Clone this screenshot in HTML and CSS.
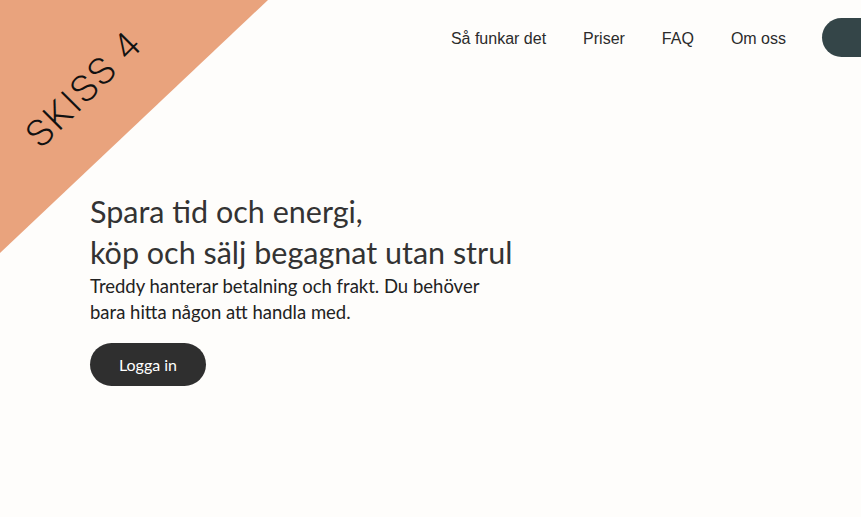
FILE: index.html
```html
<!DOCTYPE html>
<html lang="sv">
<head>
<meta charset="utf-8">
<title>Treddy</title>
<link rel="stylesheet" href="styles.css">
</head>
<body>
<div class="page">
  <div class="corner"><span class="corner-text">SKISS 4</span></div>
  <header class="header">
    <nav class="nav">
      <a class="nav-link" href="#">Så funkar det</a>
      <a class="nav-link" href="#">Priser</a>
      <a class="nav-link" href="#">FAQ</a>
      <a class="nav-link" href="#">Om oss</a>
    </nav>
    <a class="cta-top" href="#"></a>
  </header>
  <main class="hero">
    <h1 class="hero-title">Spara tid och energi,<br>köp och sälj begagnat utan strul</h1>
    <p class="hero-text">Treddy hanterar betalning och frakt. Du behöver<br>bara hitta någon att handla med.</p>
    <a class="btn" href="#">Logga in</a>
  </main>
</div>
</body>
</html>
```
FILE: styles.css
```css
html, body {
  margin: 0;
  padding: 0;
  background: #fefdfb;
  overflow: hidden;
}
.page {
  position: relative;
  width: 861px;
  height: 517px;
  overflow: hidden;
}
.corner {
  position: absolute;
  left: 0;
  top: 0;
  width: 268px;
  height: 253px;
  background: #e9a37d;
  clip-path: polygon(0 0, 100% 0, 0 100%);
  z-index: 2;
}
.corner-text {
  position: absolute;
  left: 84px;
  top: 89px;
  transform: translate(-50%, -50%) rotate(-45deg);
  font-family: "Roboto", "Liberation Sans", sans-serif;
  font-weight: 300;
  font-size: 37px;
  letter-spacing: 2.5px;
  color: #111;
  white-space: nowrap;
}
.header {
  display: flex;
  justify-content: flex-end;
  align-items: center;
  padding-top: 18px;
  margin-right: -61px;
}
.nav {
  display: flex;
  gap: 37px;
  margin-right: 36px;
  padding-top: 3px;
}
.nav-link {
  font-family: "Liberation Sans", Arial, sans-serif;
  font-size: 16px;
  color: #2b2b2b;
  text-decoration: none;
}
.cta-top {
  display: block;
  width: 100px;
  height: 39px;
  border-radius: 20px;
  background: #344548;
}
.hero {
  padding: 0 0 0 90px;
  margin-top: 134px;
}
.hero-title {
  margin: 0;
  font-family: "Lato", "Open Sans", sans-serif;
  font-weight: 400;
  font-size: 30.5px;
  line-height: 41px;
  color: #333;
}
.hero-text {
  margin: 0;
  font-family: "Lato", "Open Sans", sans-serif;
  font-size: 18.5px;
  line-height: 26px;
  color: #222;
}
.btn {
  display: inline-flex;
  align-items: center;
  justify-content: center;
  margin-top: 18px;
  width: 116px;
  height: 43px;
  border-radius: 22px;
  background: #2f2f2f;
  color: #fff;
  font-family: "Lato", "Open Sans", sans-serif;
  font-size: 16px;
  text-decoration: none;
}
```
